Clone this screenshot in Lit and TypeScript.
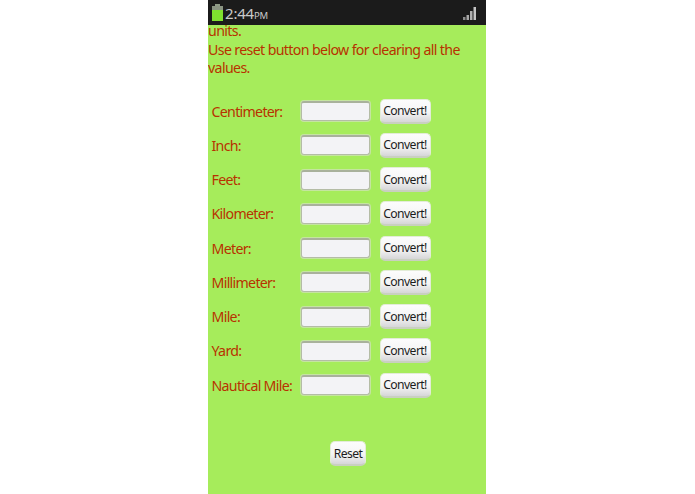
import { LitElement, html, css, svg } from "lit";
import { customElement } from "lit/decorators.js";

const UNITS = ["Centimeter:", "Inch:", "Feet:", "Kilometer:", "Meter:", "Millimeter:", "Mile:", "Yard:", "Nautical Mile:"];

@customElement("app-root")
export class AppRoot extends LitElement {
  static styles = css`
    :host { display: block; width: 695px; height: 494px; background: #fff; overflow: hidden; font-family: "Noto Sans", "Open Sans", sans-serif; }
    .phone { width: 278px; height: 494px; margin-left: 208px; background: #a6ec5b; display: flex; flex-direction: column; overflow: hidden; }
    .status { height: 25px; flex: none; background: #1b1b1b; display: flex; align-items: center; padding: 0 9px 0 4px; color: #c9c9c9; position: relative; z-index: 1; }
    .batt { flex: none; display: block; }
    .time { font-size: 15px; margin-left: 2px; letter-spacing: -0.2px; }
    .ampm { font-size: 9.5px; }
    .signal { margin-left: auto; display: block; margin-top: 1px; }
    .intro { margin: -3px 0 0; font-size: 14.2px; line-height: 18.5px; color: #b83200; height: 52px; letter-spacing: -0.64px; }
    .rows { margin-top: 20px; display: flex; flex-direction: column; padding-left: 3.5px; }
    .row { display: flex; align-items: center; height: 34.25px; }
    .label { width: 89px; font-size: 14.2px; color: #b83200; letter-spacing: -0.7px; white-space: nowrap; }
    .field { width: 69px; height: 20px; box-sizing: border-box; background: #f3f3f6; border: 1px solid #b4bca6; border-top: 2px solid #a9b19c; border-radius: 3px; box-shadow: 0 0 0 1px #c5e5a0; }
    button { font-family: inherit; font-size: 12.2px; letter-spacing: -0.6px; color: #1c1c1c; border: 1px solid #e3ecd8; border-bottom: 2px solid #c9d0c0; border-radius: 5px; background: linear-gradient(#fcfcfc 0%, #f5f5f5 55%, #d6d6d8 100%); padding: 0; cursor: pointer; height: 25px; }
    .convert { width: 51px; margin-left: 10px; }
    .reset-wrap { display: flex; justify-content: center; margin-top: 39px; padding-left: 2px; }
    .reset { width: 36px; }
  `;

  render() {
    return html`<div class="phone">
      <div class="status">
        <svg class="batt" width="11" height="17" viewBox="0 0 11 17">
          <rect x="3" y="0" width="5" height="2" fill="#8e9a86"></rect>
          <rect x="0" y="2" width="11" height="4" fill="#8a9482"></rect>
          <rect x="0" y="6" width="11" height="11" fill="#7fe02f"></rect>
        </svg>
        <span class="time">2:44<span class="ampm">PM</span></span>
        <svg class="signal" width="14" height="13" viewBox="0 0 14 13">
          ${[[0,10,3,"#8d8d8d"],[3.5,8,5,"#a8a8a8"],[7,4,9,"#b0b0b0"],[10.5,0,13,"#c4c4c4"]].map(
            ([x,y,h,c]) => svg`<rect x=${x} y=${y} width="2.5" height=${h} fill=${c}></rect>`)}
        </svg>
      </div>
      <p class="intro">units.<br>Use reset button below for clearing all the values.</p>
      <div class="rows">
        ${UNITS.map(u => html`<div class="row">
          <span class="label">${u}</span>
          <span class="field"></span>
          <button class="convert">Convert!</button>
        </div>`)}
      </div>
      <div class="reset-wrap"><button class="reset">Reset</button></div>
    </div>`;
  }
}
